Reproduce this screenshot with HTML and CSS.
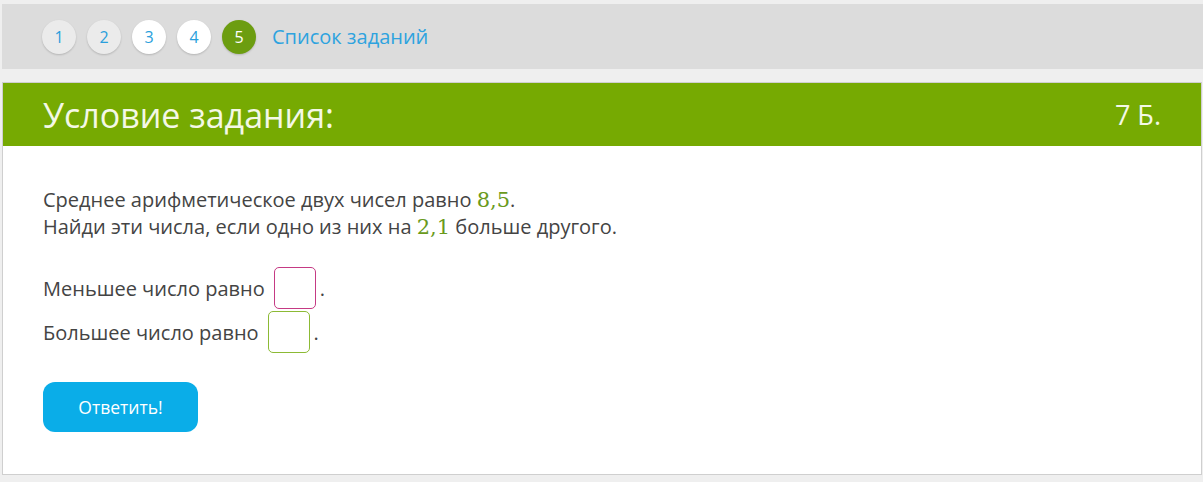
FILE: index.html
```html
<!DOCTYPE html>
<html lang="ru">
  <head>
    <meta charset="utf-8">
    <title>Условие задания</title>
    <link rel="stylesheet" href="styles.css">
  </head>
  <body>
    <div class="tasks-bar">
      <span class="task-num seen">1</span>
      <span class="task-num seen">2</span>
      <span class="task-num">3</span>
      <span class="task-num">4</span>
      <span class="task-num current">5</span>
      <a class="task-list" href="#">Список заданий</a>
    </div>

    <div class="card">
      <div class="card-head">
        <h1>Условие задания:</h1>
        <span class="points">7 Б.</span>
      </div>
      <div class="card-body">
        <p class="statement">
          Среднее арифметическое двух чисел равно <span class="num">8,5</span>.<br>
          Найди эти числа, если одно из них на <span class="num">2,1</span> больше другого.
        </p>
        <div class="answer-row">
          Меньшее число равно <input class="answer pink" type="text">.
        </div>
        <div class="answer-row">
          Большее число равно <input class="answer green" type="text">.
        </div>
        <button class="submit">Ответить!</button>
      </div>
    </div>
  </body>
</html>
```

FILE: styles.css
```css
body {
  margin: 0;
  padding: 4px 0 0 2px;
  background-color: #efefef;
  font-family: "Open Sans", "Noto Sans", sans-serif;
  color: #444;
}

.tasks-bar {
  display: flex;
  align-items: center;
  gap: 11px;
  height: 65px;
  padding-left: 40px;
  background-color: #dcdcdc;
}

.task-num {
  width: 34px;
  height: 34px;
  border-radius: 50%;
  background-color: #fff;
  box-shadow: 0 1px 2px rgba(0, 0, 0, 0.18);
  display: flex;
  align-items: center;
  justify-content: center;
  font-size: 16px;
  color: #2a9fdc;
}

.task-num.seen {
  background-color: #ebebeb;
}

.task-num.current {
  background-color: #6c9d10;
  color: #fff;
}

.task-list {
  margin-left: 5px;
  font-size: 20px;
  color: #2ea3df;
  text-decoration: none;
}

.card {
  margin-top: 13px;
  margin-right: 1px;
  background-color: #fff;
  border: 1px solid #cfcfcf;
  height: 391px;
}

.card-head {
  display: flex;
  align-items: center;
  justify-content: space-between;
  height: 63px;
  padding: 0 40px 0 40px;
  background-color: #76aa02;
  color: #f4f8e6;
}

.card-head h1 {
  margin: 0;
  font-size: 34px;
  font-weight: 400;
}

.points {
  font-size: 27px;
}

.card-body {
  padding: 40px 40px 0 40px;
  font-size: 20px;
}

.statement {
  margin: 0;
  line-height: 27px;
}

.num {
  font-family: "DejaVu Serif", "Liberation Serif", serif;
  font-size: 21px;
  line-height: 20px;
  color: #6a9a1c;
}

.answer-row {
  display: flex;
  align-items: center;
  margin-top: 2px;
}

.answer-row:first-of-type {
  margin-top: 27px;
}

.answer {
  width: 42px;
  height: 42px;
  box-sizing: border-box;
  margin: 0 4px 0 9px;
  border-radius: 5px;
  border: 1px solid #c53a84;
  outline: none;
}

.answer.green {
  border-color: #8cba35;
}

.submit {
  margin-top: 29px;
  width: 155px;
  height: 50px;
  border: none;
  border-radius: 12px;
  background-color: #0aade8;
  color: #fff;
  font-family: "Open Sans", "Noto Sans", sans-serif;
  font-size: 17.5px;
  cursor: pointer;
}
```
